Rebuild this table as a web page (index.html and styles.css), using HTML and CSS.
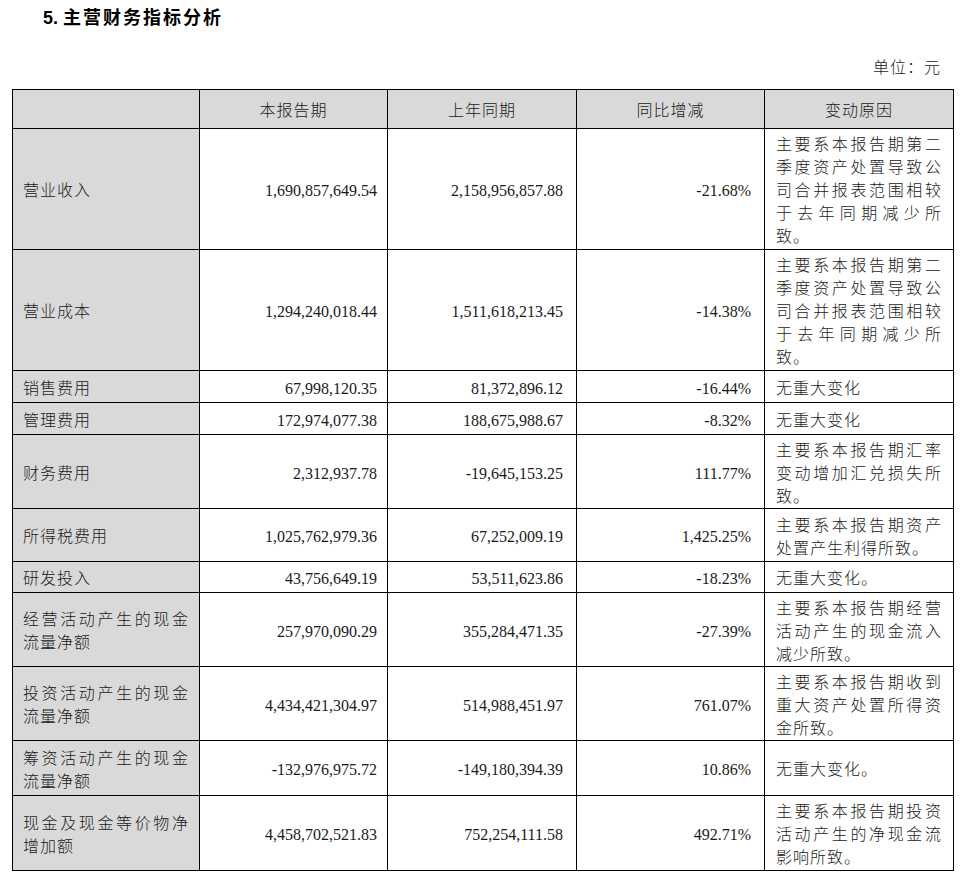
FILE: index.html
```html
<!DOCTYPE html>
<html lang="zh-CN">
<head>
<meta charset="utf-8">
<title>主营财务指标分析</title>
<link rel="stylesheet" href="styles.css">
</head>
<body>
<div class="page">
  <div class="title">5. <span class="title-cn">主营财务指标分析</span></div>
  <div class="unit">单位：元</div>
  <table class="fin">
    <colgroup>
      <col class="c-label">
      <col class="c-cur">
      <col class="c-prev">
      <col class="c-pct">
      <col class="c-reason">
    </colgroup>
    <thead>
      <tr class="hdr">
        <th class="blank"></th>
        <th>本报告期</th>
        <th>上年同期</th>
        <th>同比增减</th>
        <th>变动原因</th>
      </tr>
    </thead>
    <tbody>
      <tr class="r5">
        <td class="label">营业收入</td>
        <td class="num n1">1,690,857,649.54</td>
        <td class="num">2,158,956,857.88</td>
        <td class="num">-21.68%</td>
        <td class="reason">主要系本报告期第二季度资产处置导致公司合并报表范围相较于去年同期减少所致。</td>
      </tr>
      <tr class="r5">
        <td class="label">营业成本</td>
        <td class="num n1">1,294,240,018.44</td>
        <td class="num">1,511,618,213.45</td>
        <td class="num">-14.38%</td>
        <td class="reason">主要系本报告期第二季度资产处置导致公司合并报表范围相较于去年同期减少所致。</td>
      </tr>
      <tr class="r1">
        <td class="label">销售费用</td>
        <td class="num n1">67,998,120.35</td>
        <td class="num">81,372,896.12</td>
        <td class="num">-16.44%</td>
        <td class="reason">无重大变化</td>
      </tr>
      <tr class="r1">
        <td class="label">管理费用</td>
        <td class="num n1">172,974,077.38</td>
        <td class="num">188,675,988.67</td>
        <td class="num">-8.32%</td>
        <td class="reason">无重大变化</td>
      </tr>
      <tr class="r3">
        <td class="label">财务费用</td>
        <td class="num n1">2,312,937.78</td>
        <td class="num">-19,645,153.25</td>
        <td class="num">111.77%</td>
        <td class="reason">主要系本报告期汇率变动增加汇兑损失所致。</td>
      </tr>
      <tr class="r2">
        <td class="label">所得税费用</td>
        <td class="num n1">1,025,762,979.36</td>
        <td class="num">67,252,009.19</td>
        <td class="num">1,425.25%</td>
        <td class="reason">主要系本报告期资产处置产生利得所致。</td>
      </tr>
      <tr class="r1s">
        <td class="label">研发投入</td>
        <td class="num n1">43,756,649.19</td>
        <td class="num">53,511,623.86</td>
        <td class="num">-18.23%</td>
        <td class="reason">无重大变化。</td>
      </tr>
      <tr class="r3">
        <td class="label">经营活动产生的现金流量净额</td>
        <td class="num n1">257,970,090.29</td>
        <td class="num">355,284,471.35</td>
        <td class="num">-27.39%</td>
        <td class="reason">主要系本报告期经营活动产生的现金流入减少所致。</td>
      </tr>
      <tr class="r3">
        <td class="label">投资活动产生的现金流量净额</td>
        <td class="num n1">4,434,421,304.97</td>
        <td class="num">514,988,451.97</td>
        <td class="num">761.07%</td>
        <td class="reason">主要系本报告期收到重大资产处置所得资金所致。</td>
      </tr>
      <tr class="r2l">
        <td class="label">筹资活动产生的现金流量净额</td>
        <td class="num n1">-132,976,975.72</td>
        <td class="num">-149,180,394.39</td>
        <td class="num">10.86%</td>
        <td class="reason">无重大变化。</td>
      </tr>
      <tr class="r3l">
        <td class="label">现金及现金等价物净增加额</td>
        <td class="num n1">4,458,702,521.83</td>
        <td class="num">752,254,111.58</td>
        <td class="num">492.71%</td>
        <td class="reason">主要系本报告期投资活动产生的净现金流影响所致。</td>
      </tr>
    </tbody>
  </table>
</div>
</body>
</html>
```

FILE: styles.css
```css
html, body {
  margin: 0;
  padding: 0;
  background: #ffffff;
}

.page {
  padding: 0 12px;
  color: #000000;
  font-family: "Liberation Serif", "Noto Sans CJK SC", serif;
}

.title {
  margin: 6px 0 0 31px;
  font-family: "Liberation Sans", "Noto Sans CJK SC", sans-serif;
  font-size: 18px;
  font-weight: bold;
  line-height: 24px;
  height: 24px;
  color: #000;
}

.title-cn {
  letter-spacing: 2px;
}

.unit {
  margin-top: 26px;
  padding-right: 11px;
  text-align: right;
  font-size: 16px;
  font-weight: 300;
  line-height: 24px;
  letter-spacing: 1px;
  color: #222;
}

.fin {
  margin-top: 9px;
  width: 941px;
  border-collapse: collapse;
  table-layout: fixed;
  font-size: 16px;
  line-height: 23px;
  color: #1a1a1a;
}

.c-label { width: 187px; }
.c-cur { width: 188px; }
.c-prev { width: 189px; }
.c-pct { width: 188px; }
.c-reason { width: 189px; }

.fin th,
.fin td {
  border: 1px solid #000000;
  vertical-align: middle;
  padding: 3px 13px 0 10px;
}

.fin th {
  background: #d9d9d9;
  font-weight: 300;
  text-align: center;
  letter-spacing: 1px;
  padding-left: 10px;
  padding-right: 10px;
}

.hdr { height: 39px; }
.r5 { height: 121px; }
.r1 { height: 32px; }
.r1s { height: 31px; }
.r3 { height: 74px; }
.r3l { height: 75px; }
.r2 { height: 53px; }
.r2l { height: 55px; }

.fin td.label {
  background: #d9d9d9;
  text-align: justify;
  letter-spacing: 1px;
  font-weight: 300;
  padding-left: 10px;
  padding-right: 10px;
}

.fin td.num {
  text-align: right;
  white-space: nowrap;
}

.fin td.n1 {
  padding-right: 10px;
}

.fin td.reason {
  text-align: justify;
  letter-spacing: 1px;
  font-weight: 300;
  padding-left: 11px;
  padding-right: 11px;
}
```
